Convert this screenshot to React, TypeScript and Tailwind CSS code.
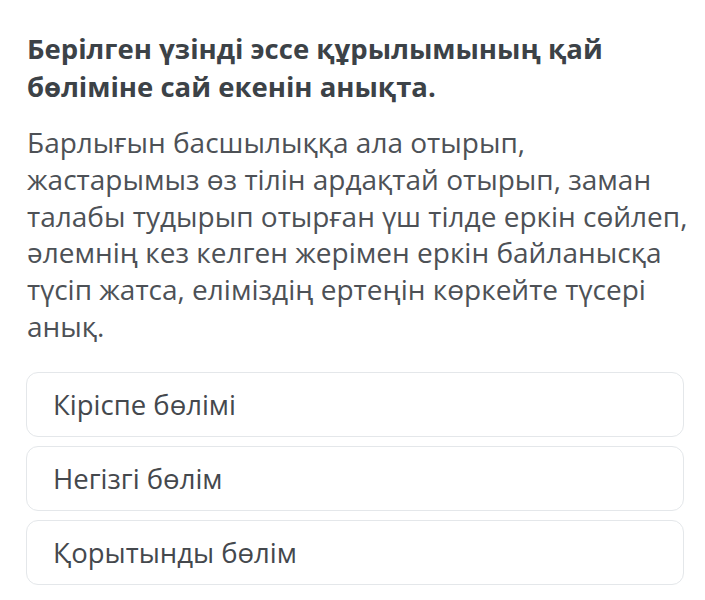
export default function App() {
  const options = ["Кіріспе бөлімі", "Негізгі бөлім", "Қорытынды бөлім"];
  const lines = [
    "Барлығын басшылыққа ала отырып,",
    "жастарымыз өз тілін ардақтай отырып, заман",
    "талабы тудырып отырған үш тілде еркін сөйлеп,",
    "әлемнің кез келген жерімен еркін байланысқа",
    "түсіп жатса, еліміздің ертеңін көркейте түсері",
    "анық.",
  ];

  return (
    <div className="min-h-screen bg-white font-['Open_Sans',sans-serif]">
      <main className="px-[26px] pt-[30px]">
        <h1 className="pl-px text-[27.5px] leading-[38px] font-bold text-[#3c4247]">
          Берілген үзінді эссе құрылымының қай
          <br />
          бөліміне сай екенін анықта.
        </h1>

        <p className="mt-[18px] pl-px text-[28px] leading-[36.8px] whitespace-nowrap text-[#4d5156]">
          {lines.map((l, i) => (
            <span key={i} className="block">
              {l}
            </span>
          ))}
        </p>

        <div className="mt-[27px] flex w-[658px] flex-col gap-[9px]">
          {options.map((o) => (
            <div
              key={o}
              className="flex h-[65px] items-center rounded-[12px] border border-[#e4e7ea] bg-white px-[26px] text-[27.5px] text-[#44484d]"
            >
              {o}
            </div>
          ))}
        </div>
      </main>
    </div>
  );
}
